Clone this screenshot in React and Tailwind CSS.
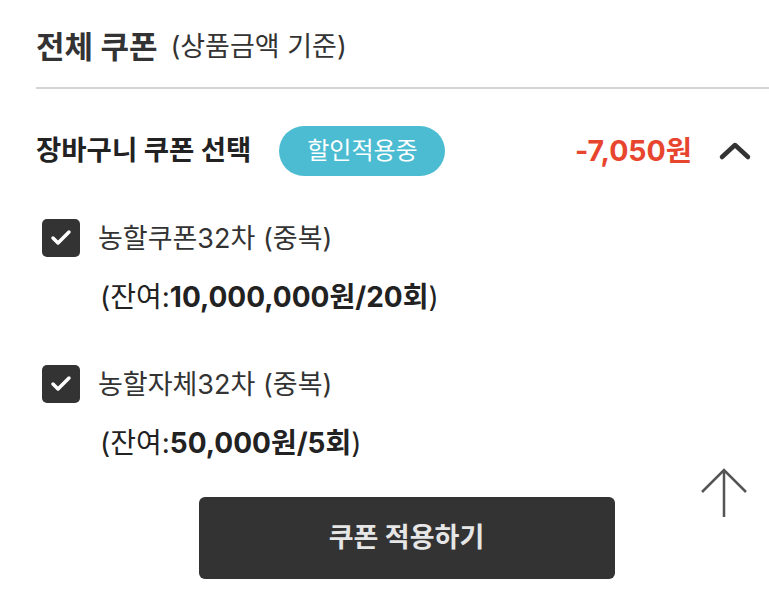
import { Check } from 'lucide-react';

const font = { fontFamily: '"Inter", "Noto Sans CJK KR", sans-serif' };

function CouponItem({ name, amount, count }) {
  return (
    <div className="flex flex-col">
      <div className="flex items-center h-[38px]">
        <div className="ml-[6px] w-[38px] h-[38px] rounded-[5px] bg-[#333333] flex items-center justify-center">
          <Check size={24} strokeWidth={3.5} className="text-white" />
        </div>
        <span className="ml-[18px] text-[27px] leading-none text-[#333333]">{name}</span>
      </div>
      <div className="mt-[27px] ml-[64px] h-[26px] flex items-center text-[28px] leading-none text-[#222222]">
        <span>(잔여:<span className="font-bold">{amount}원/{count}회</span>)</span>
      </div>
    </div>
  );
}

export default function App() {
  return (
    <div className="w-[769px] h-[589px] bg-white overflow-hidden" style={font}>
      {/* Header */}
      <div className="pl-[36px] pt-[31px] h-[61px] flex items-center gap-[13px]">
        <h1 className="text-[31px] font-bold text-[#333333] leading-none">전체 쿠폰</h1>
        <span className="text-[27px] text-[#333333] leading-none">(상품금액 기준)</span>
      </div>
      <div className="ml-[36px] mt-[26px] border-t-2 border-[#d4d4d4]" />

      {/* Cart coupon selection */}
      <div className="pl-[36px] pr-[17px] mt-[37px] flex items-center h-[50px]">
        <span className="text-[27.5px] font-bold text-[#222222]">장바구니 쿠폰 선택</span>
        <span className="ml-[28px] h-[50px] w-[166px] rounded-full bg-[#4bbcd1] text-white text-[24px] flex items-center justify-center">
          할인적용중
        </span>
        <span className="ml-auto text-[28.5px] font-bold text-[#e8452f]">-7,050원</span>
        <svg width="34" height="20" viewBox="0 0 34 20" className="ml-[26px]">
          <path d="M4 16 L17 4 L30 16" fill="none" stroke="#333333" strokeWidth="4.5" strokeLinecap="round" strokeLinejoin="round" />
        </svg>
      </div>

      <div className="pl-[36px] mt-[43px] flex flex-col gap-[55px]">
        <CouponItem name="농할쿠폰32차 (중복)" amount="10,000,000" count="20" />
        <CouponItem name="농할자체32차 (중복)" amount="50,000" count="5" />
      </div>

      <div className="relative mt-[41px] flex justify-center">
        <button className="ml-[44px] w-[416px] h-[82px] rounded-[6px] bg-[#333333] text-[#e6e6e6] text-[27px] font-bold">
          쿠폰 적용하기
        </button>
        <svg width="50" height="52" viewBox="0 0 50 52" className="absolute right-[20px] top-[-30px]">
          <path d="M25 50 L25 3 M3 25 L25 3 L47 25" fill="none" stroke="#555555" strokeWidth="2.5" />
        </svg>
      </div>
    </div>
  );
}
